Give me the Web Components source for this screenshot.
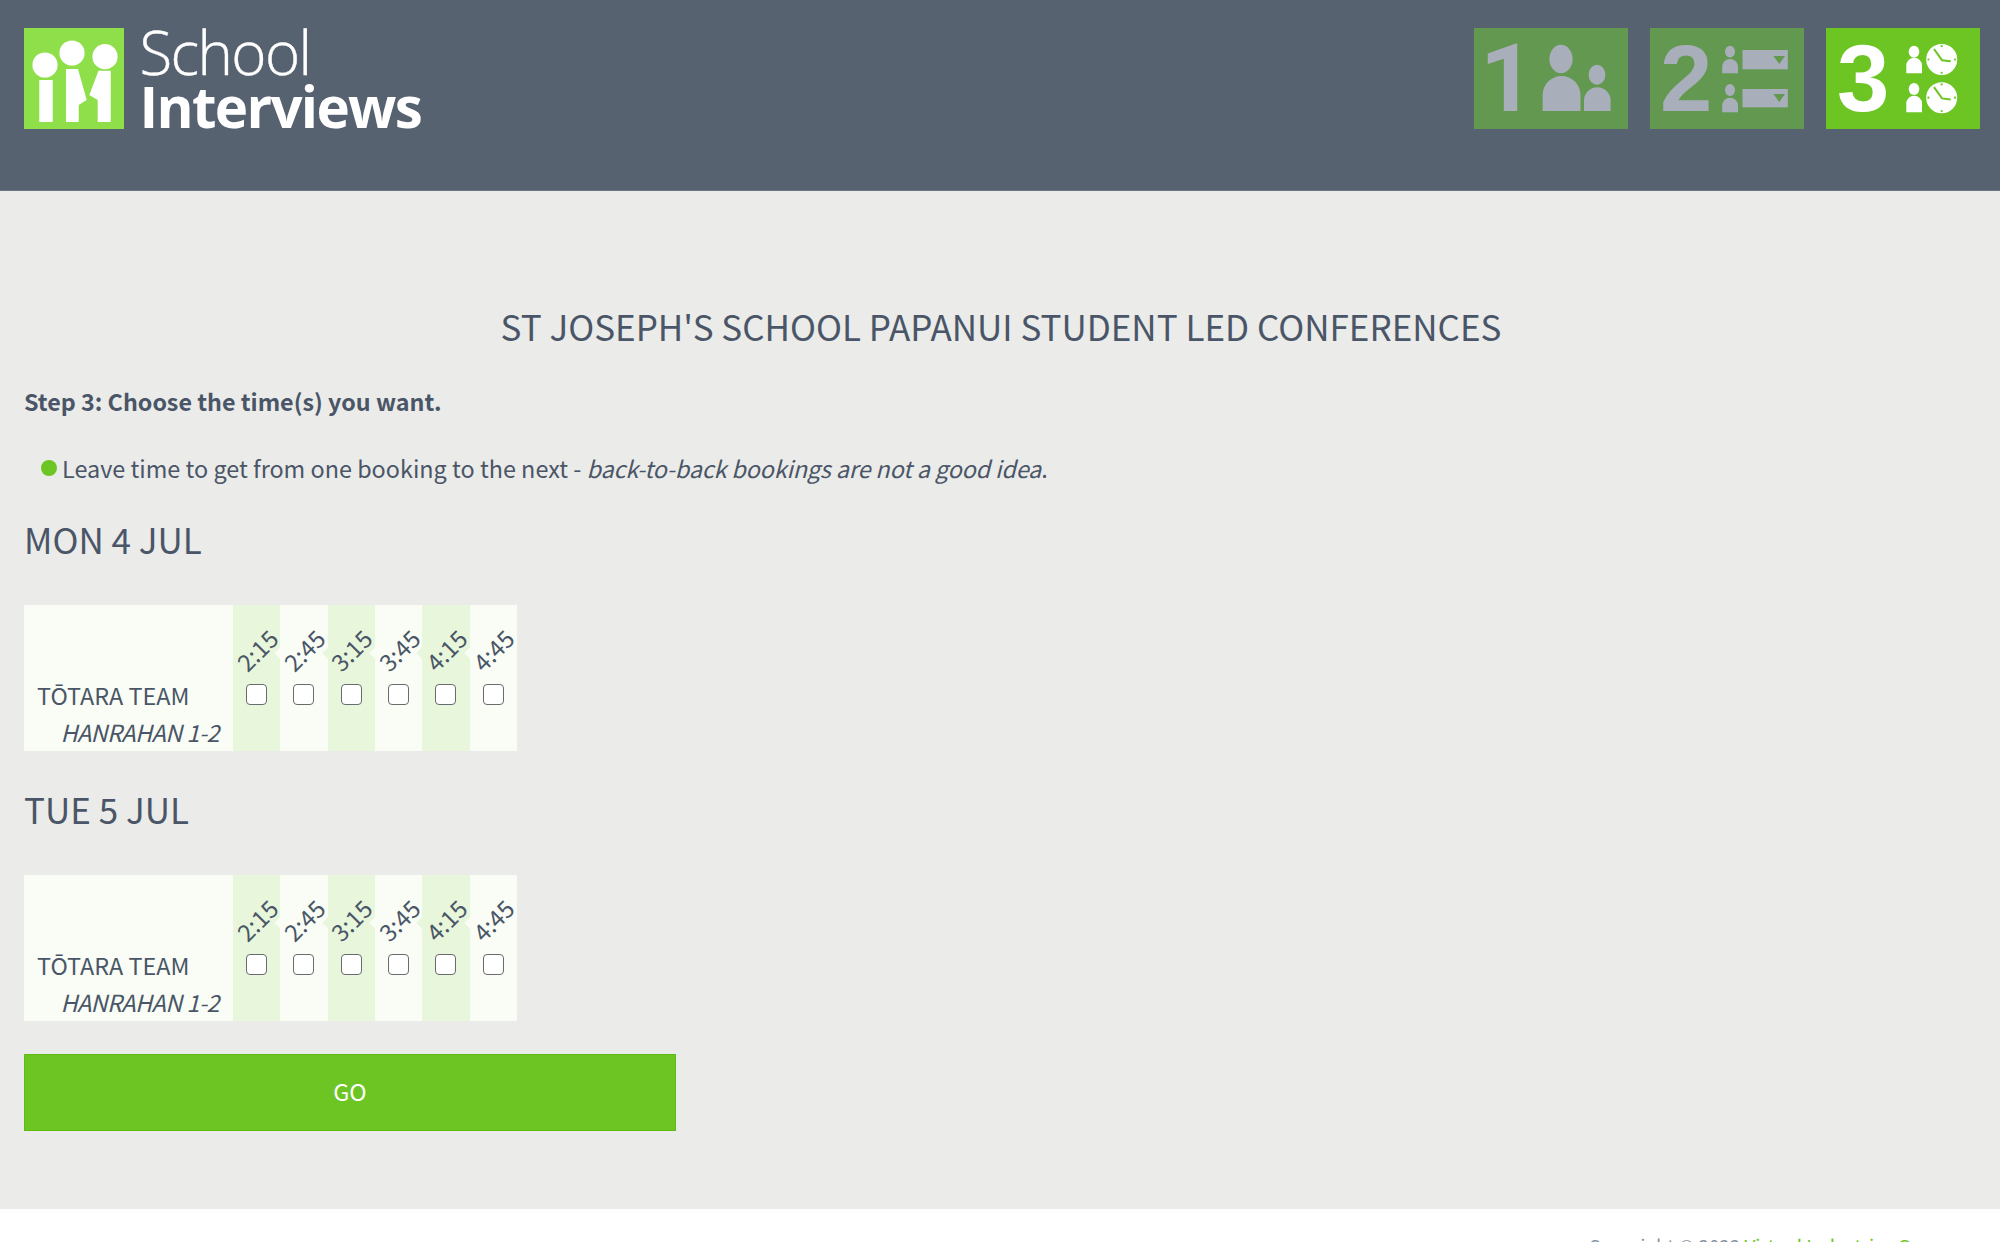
<!DOCTYPE html>
<html lang="en">
<head>
<meta charset="utf-8">
<title>School Interviews</title>
<style>
html,body{margin:0;padding:0;height:1242px;overflow:hidden;background:#fff}
body{font-family:"Noto Sans CJK JP","Source Sans Pro","Open Sans",sans-serif;color:#4a5667;font-size:23.4px}
em{letter-spacing:-.15px}
</style>
</head>
<body>
<si-page>
  <si-header slot="header"></si-header>
  <si-title>ST JOSEPH'S SCHOOL PAPANUI STUDENT LED CONFERENCES</si-title>
  <si-instruction>Step 3: Choose the time(s) you want.</si-instruction>
  <si-note>Leave time to get from one booking to the next - <em>back-to-back bookings are not a good idea</em>.</si-note>
  <si-day date="MON 4 JUL"></si-day>
  <si-day date="TUE 5 JUL" last></si-day>
  <si-go>GO</si-go>
  <si-footer slot="footer"></si-footer>
</si-page>
<script>
class Base extends HTMLElement{
  constructor(){super();this.attachShadow({mode:'open'});}
  connectedCallback(){this.shadowRoot.innerHTML=this.render();}
}
customElements.define('si-page',class extends Base{render(){return `<style>
:host{display:flex;flex-direction:column;height:1242px;overflow:hidden}
main{background:#ebebe9;padding:112.5px 24px 0;height:1018px;box-sizing:border-box;flex:none}
</style><slot name="header"></slot><main><slot></slot></main><slot name="footer"></slot>`;}});

const person=(cx,hy,rx,ry,x0,x1,y0,y1,fill)=>{const r=(x1-x0)/2;return `<ellipse cx="${cx}" cy="${hy}" rx="${rx}" ry="${ry}" fill="${fill}"/><path d="M${x0} ${y1}V${y0+r}A${r} ${r} 0 0 1 ${x1} ${y0+r}V${y1}Z" fill="${fill}"/>`;};
const clock=(cy)=>`<circle cx="115.7" cy="${cy}" r="15.5" fill="#fff"/><path d="M108 ${cy-10.5}L116 ${cy+.7}L124.7 ${cy+1.7}" fill="none" stroke="#6dc524" stroke-width="2"/><g fill="#6dc524"><circle cx="115.7" cy="${cy-13.3}" r="1.1"/><circle cx="115.7" cy="${cy+13.3}" r="1.1"/><circle cx="102.4" cy="${cy}" r="1.1"/><circle cx="129" cy="${cy}" r="1.1"/></g>`;

customElements.define('si-logo',class extends Base{render(){return `<style>
:host{display:flex;align-items:flex-start;color:#fff}
svg{display:block;width:100px;height:101px;flex:none}
.t{margin-left:15.5px;font-family:"Open Sans",sans-serif;white-space:nowrap}
.a{font-size:60px;font-weight:300;line-height:52px;height:52px;margin-top:-2px;letter-spacing:-1.6px;-webkit-text-stroke:.4px #fff}
.b{font-size:56.5px;font-weight:700;line-height:58px;letter-spacing:-1.7px}
</style><svg viewBox="24 28 100 101" aria-hidden="true"><rect x="24" y="28" width="100" height="101" fill="#8fdf4b"/>
<g fill="#fff"><circle cx="45" cy="65" r="12.6"/><circle cx="72" cy="53" r="12.6"/><circle cx="105" cy="56.7" r="12.6"/>
<rect x="39.3" y="80" width="13.4" height="42"/>
<path d="M66 69H78L86.7 100L78.7 105V122H66Z"/>
<path d="M110.7 70.7H98.5L89.3 95L97.7 100V122H110.7Z"/></g></svg>
<div class="t"><div class="a">School</div><div class="b">Interviews</div></div>`;}});

customElements.define('si-step',class extends Base{render(){
const n=this.getAttribute('n'),on=n==='3';
const f=on?'#fff':'#a9afba',bg=on?'#6dc524':'#639850';
let g='';
if(n==='1')g=person(87,31,11.6,14.3,68.6,106.5,48,83,f)+person(123,46.7,8.4,10,110,136.6,59.3,83,f);
if(n==='2')g=person(80,23.7,5,5.9,72.2,88,31,45.3,f)+person(80,62,5,5.9,72.2,88,69.7,84.3,f)+
 `<rect x="92.5" y="22" width="45.3" height="19.3" fill="${f}"/><rect x="92.5" y="61" width="45.3" height="18.3" fill="${f}"/><path d="M123.4 28H135L129.2 36ZM123.4 66H135L129.2 74Z" fill="${bg}"/>`;
if(n==='3')g=person(88,23.7,5.3,6,80.3,96,29.7,45.3,f)+person(88,61,5.3,6,80.3,96,67.7,84.3,f)+clock(31.5)+clock(69.7);
const pad={1:6,2:10,3:11}[n];
const fam=n==='1'?'700 95px/101px Roboto,"Liberation Sans",sans-serif':'700 94px/101px "Liberation Sans",Arial,sans-serif';
return `<style>
:host{display:flex;width:154px;height:101px;background:${bg};flex:none;color:${f}}
span{box-sizing:border-box;width:60px;padding-left:${pad}px;font:${fam}}
svg{display:block;width:94px;height:101px}
</style><span>${n}</span><svg viewBox="60 0 94 101" aria-hidden="true">${g}</svg>`;}});

customElements.define('si-header',class extends Base{render(){return `<style>
:host{display:flex;justify-content:space-between;align-items:flex-start;box-sizing:border-box;height:191px;padding:28px 20px 0 24px;background:#566270;border-bottom:1px solid #6b7683;flex:none}
nav{display:flex;gap:22px}
</style><si-logo></si-logo><nav><si-step n="1"></si-step><si-step n="2"></si-step><si-step n="3"></si-step></nav>`;}});

customElements.define('si-title',class extends Base{render(){return `<style>
:host{display:block;text-align:center;font-size:35px;line-height:44px;margin:0 0 37.5px 2px}
</style><slot></slot>`;}});
customElements.define('si-instruction',class extends Base{render(){return `<style>
:host{display:block;font-weight:700;font-size:23.3px;line-height:32px;margin-bottom:35px}
</style><slot></slot>`;}});
customElements.define('si-note',class extends Base{render(){return `<style>
:host{display:flex;align-items:center;gap:5px;padding-left:17px;font-size:23.4px;line-height:32px;margin-bottom:32.5px}
i{display:block;width:16px;height:16px;border-radius:50%;background:#6dc524;flex:none}
</style><i></i><div><slot></slot></div>`;}});

customElements.define('si-time',class extends Base{render(){
const t=this.getAttribute('t'),tint=this.hasAttribute('tint'),first=this.hasAttribute('first');
const bg=tint?'#e8f6dc':'#f9fdf5';
return `<style>
:host{display:flex;flex-direction:column;align-items:center;background:${bg};padding-top:21px;position:relative;min-width:0}
.l{flex:none;height:48px;line-height:48px;font-size:23.6px;white-space:nowrap;transform:rotate(-45deg);margin-bottom:10px;position:relative;z-index:1}
.n{position:absolute;left:-4px;top:44px;width:8px;height:8px;background:${bg};transform:rotate(45deg);display:${first?'none':'block'}}
.c{appearance:none;-webkit-appearance:none;display:block;box-sizing:border-box;width:21px;height:21px;margin:0;background:#fff;border:1.8px solid #6a6b6e;border-radius:4px}
</style><div class="n"></div><div class="l">${t}</div><input class="c" type="checkbox" aria-label="${t}">`;}});

customElements.define('si-timetable',class extends Base{render(){
const ts=['2:15','2:45','3:15','3:45','4:15','4:45'];
return `<style>
:host{display:grid;grid-template-columns:209px repeat(6,47.33px);width:493px;height:145.5px;background:#f9fdf5}
.who{display:flex;flex-direction:column;justify-content:flex-end;font-size:23.4px}
.team{line-height:36px;padding-left:13px;margin-bottom:1px}
.name{line-height:36px;text-align:right;padding-right:14px;font-style:italic;letter-spacing:-.5px;margin-bottom:1px}
</style><div class="who"><div class="team">TŌTARA TEAM</div><div class="name">HANRAHAN 1-2</div></div>
${ts.map((t,i)=>`<si-time t="${t}" ${i%2?'':'tint'} ${i?'':'first'}></si-time>`).join('')}`;}});

customElements.define('si-day',class extends Base{render(){const last=this.hasAttribute('last');return `<style>
:host{display:block;margin-bottom:${last?33.5:36}px}
h2{margin:0 0 44.5px;font-size:35px;font-weight:400;line-height:44px}
</style><h2>${this.getAttribute('date')}</h2><si-timetable></si-timetable>`;}});

customElements.define('si-go',class extends Base{render(){return `<style>
:host{display:flex;align-items:center;justify-content:center;box-sizing:border-box;width:652px;height:77px;padding-bottom:4px;background:#6dc524;border:1px solid #5cbd10;color:#fff;font-size:23.4px}
</style><slot></slot>`;}});

customElements.define('si-footer',class extends Base{render(){return `<style>
:host{display:block;flex:1;background:#fff;text-align:right;padding:23px 48px 0 0;font-size:18.8px;line-height:28px;color:#8a93a0;white-space:nowrap}
a{color:#6dc524;text-decoration:none}
</style>Copyright © 2022 <a>Virtual Industries Group</a>`;}});
</script>
</body>
</html>
